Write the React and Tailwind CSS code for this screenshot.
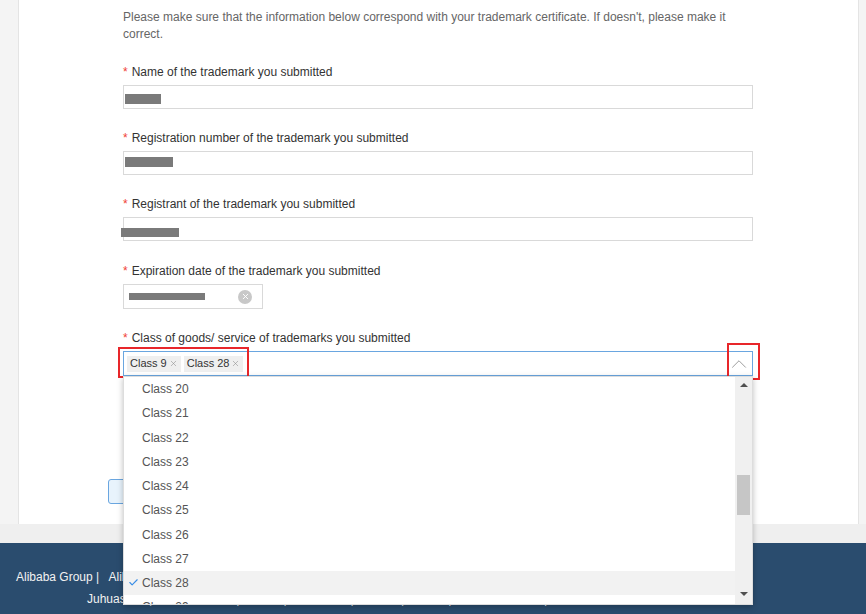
import { ChevronUp, Check, X } from 'lucide-react'

const fields = [
  { label: 'Name of the trademark you submitted', block: 'ml-[1px] mt-[8px] w-[36px] h-[10px]' },
  { label: 'Registration number of the trademark you submitted', block: 'ml-[1px] mt-[5px] w-[48px] h-[10px]' },
  { label: 'Registrant of the trademark you submitted', block: '-ml-[3px] mt-[10px] w-[58px] h-[9px]' },
]

const items = ['Class 20', 'Class 21', 'Class 22', 'Class 23', 'Class 24', 'Class 25', 'Class 26', 'Class 27', 'Class 28', 'Class 29', 'Class 30']

function Label({ children }) {
  return (
    <div className="h-[18px] leading-[18px] text-[12px] text-[#333]">
      <span className="text-[#f04134] mr-[4px]">*</span>
      {children}
    </div>
  )
}

function Tag({ text }) {
  return (
    <span className="flex items-center h-[16px] px-[3px] bg-[#efefef] text-[11px] text-[#333] gap-[2px]">
      {text}
      <X className="w-[9px] h-[9px] text-[#8c8c8c]" strokeWidth={1.5} />
    </span>
  )
}

function Dropdown() {
  return (
    <div className="absolute left-0 top-[25px] w-full h-[229px] bg-white border border-[#ddd] shadow-[0_2px_6px_rgba(0,0,0,0.25)] flex z-10">
      <div className="flex-1 overflow-hidden">
        {items.map((it) => {
          const sel = it === 'Class 28'
          return (
            <div
              key={it}
              className={`relative h-[24.25px] leading-[24px] pl-[18px] text-[12px] text-[#555] ${sel ? 'bg-[#f2f2f2]' : ''}`}
            >
              {sel && <Check className="absolute left-[4px] top-[6px] w-[11px] h-[11px] text-[#3a8ee6]" strokeWidth={2.5} />}
              {it}
            </div>
          )
        })}
      </div>
      <div className="w-[17px] bg-[#f0f0f0] flex flex-col items-center">
        <div className="h-[16px] flex items-center justify-center">
          <div className="w-0 h-0 border-l-[4px] border-r-[4px] border-b-[4px] border-l-transparent border-r-transparent border-b-[#505050]" />
        </div>
        <div className="mt-[82px] w-[13px] h-[40px] bg-[#c6c6c6]" />
        <div className="flex-1" />
        <div className="h-[16px] flex items-center justify-center mb-[2px]">
          <div className="w-0 h-0 border-l-[4px] border-r-[4px] border-t-[4px] border-l-transparent border-r-transparent border-t-[#505050]" />
        </div>
      </div>
    </div>
  )
}

export default function App() {
  return (
    <div className="relative w-[866px] h-[614px] overflow-hidden bg-[#efefef] font-['Liberation_Sans',Arial,sans-serif]">
      <div className="flex">
        <div className="w-[19px] h-[524px] bg-[#f4f4f4] border-r border-[#e4e4e4]" />
        <div className="w-[839px] h-[524px] bg-white pl-[104px] pt-[9px]">
          <div className="w-[630px]">
            <p className="text-[12px] leading-[17px] text-[#666]">
              Please make sure that the information below correspond with your trademark certificate. If doesn't, please make it correct.
            </p>

            <div className="mt-[20px] flex flex-col gap-[20px]">
              {fields.map((f) => (
                <div key={f.label}>
                  <Label>{f.label}</Label>
                  <div className="mt-[4px] h-[24px] border border-[#d9d9d9] bg-white">
                    <div className={`${f.block} bg-[#7a7a7a]`} />
                  </div>
                </div>
              ))}

              <div className="mt-[1px]">
                <Label>Expiration date of the trademark you submitted</Label>
                <div className="mt-[4px] w-[140px] h-[25px] border border-[#d9d9d9] flex items-center pl-[5px] pr-[10px] justify-between">
                  <div className="w-[76px] h-[7px] bg-[#7a7a7a]" />
                  <span className="w-[14px] h-[14px] rounded-full bg-[#c8c8c8] flex items-center justify-center">
                    <X className="w-[9px] h-[9px] text-white" strokeWidth={2.5} />
                  </span>
                </div>
              </div>

              <div>
                <Label>Class of goods/ service of trademarks you submitted</Label>
                <div className="relative mt-[4px]">
                  <div className="h-[25px] border border-[#6aa6e0] flex items-center pl-[3px] pr-[0px] gap-[3px]">
                    <Tag text="Class 9" />
                    <Tag text="Class 28" />
                    <div className="flex-1" />
                    <ChevronUp className="w-[26px] h-[26px] text-[#9a9a9a]" strokeWidth={0.9} />
                  </div>
                  <div className="absolute -left-[5px] -top-[4px] w-[131px] h-[31px] border-2 border-[#e8262a]" />
                  <div className="absolute left-[604px] -top-[8px] w-[33px] h-[37px] border-2 border-[#e8262a]" />
                  <Dropdown />
                </div>
              </div>

              <div className="mt-[5px] h-[45px] border border-[#d9d9d9]" />
            </div>

            <div className="mt-[33px] -ml-[15px] w-[110px] h-[25px] rounded-[3px] border border-[#6aa6e0] bg-[#e8f3fc]" />
          </div>
        </div>
        <div className="flex-1 h-[524px] bg-[#f4f4f4] border-l border-[#e4e4e4]" />
      </div>

      <div className="mt-[19px] h-[71px] bg-[#2a4c6e] text-[12px] text-[#f2f2f2] pt-[23px]">
        <div className="h-[22px] leading-[22px] pl-[16px] whitespace-nowrap">
          Alibaba Group |&nbsp;&nbsp; Alibaba.com | AliExpress | 1688.com | Taobao Marketplace | Tmall | Lazada | Alibaba Cloud | Fliggy | Alimama | Alipay
        </div>
        <div className="h-[22px] leading-[22px] pl-[87px] whitespace-nowrap">
          Juhuasuan | Alibaba Health | Koubei | AliTelecom | Cainiao | Ele.me | Alibaba Pictures | Hema
        </div>
      </div>
    </div>
  )
}
